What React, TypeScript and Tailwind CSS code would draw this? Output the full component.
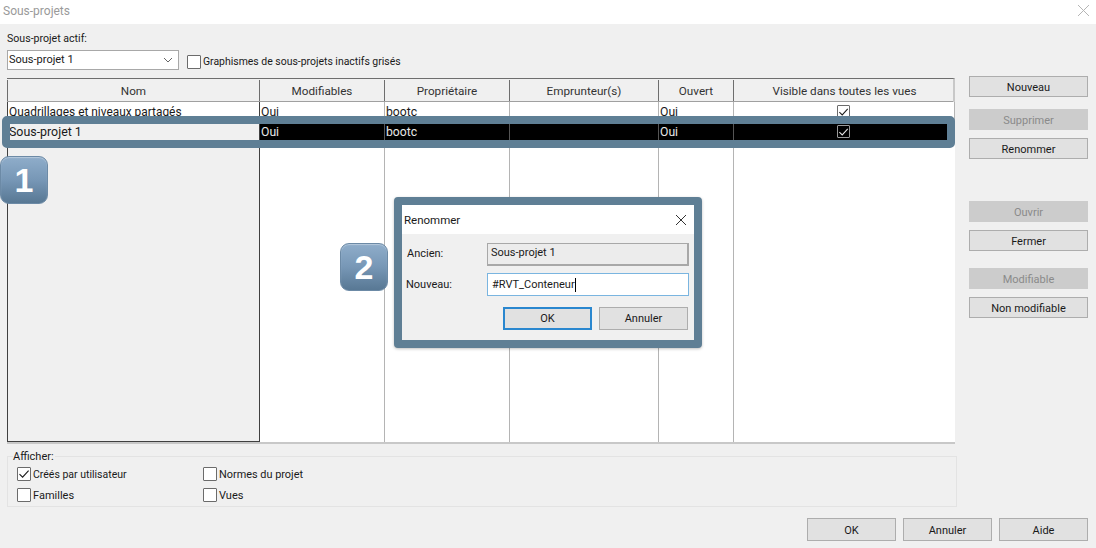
import React from "react";

const COLS = "grid grid-cols-[253px_125px_125px_149px_75px_221px]";

function Box({ checked, size = "w-[14px] h-[14px]", tone = "border-[#6b6b6b] bg-white" }: { checked?: boolean; size?: string; tone?: string }) {
  return (
    <span className={`${size} ${tone} border rounded-[1px] flex items-center justify-center shrink-0`}>
      {checked && (
        <svg width="12" height="12" viewBox="0 0 12 12" fill="none">
          <path d="M1.5 6.2 L4.6 9.2 L10.6 2.6" stroke="currentColor" strokeWidth="1.1" />
        </svg>
      )}
    </span>
  );
}

function Btn({ children, disabled, w = "w-[119px]", mt = "" }: { children: React.ReactNode; disabled?: boolean; w?: string; mt?: string }) {
  return (
    <div
      className={`${w} ${mt} h-[21px] pt-[1px] flex items-center justify-center border text-[11px] leading-none ${
        disabled ? "bg-[#cccccc] border-[#cccccc] text-[#8a8a8a]" : "bg-[#e1e1e1] border-[#adadad] text-[#1a1a1a]"
      }`}
    >
      {children}
    </div>
  );
}

function Check({ label, checked, text = "" }: { label: string; checked?: boolean; text?: string }) {
  return (
    <div className={`flex items-center gap-[2px] h-[14px] ${text}`}>
      <Box checked={checked} />
      <span className="pt-[1px]">{label}</span>
    </div>
  );
}

function Row({ name, nameSize, selected }: { name: string; nameSize: string; selected?: boolean }) {
  const tone = selected ? "bg-black text-[#e8e8e8] border-[#555555]" : "bg-white text-[#1a1a1a] border-[#b4b4b4]";
  const cell = `border-r ${tone} pl-[1px] pb-[1px] flex items-center overflow-hidden`;
  return (
    <div className={`${COLS} h-[20px] text-[12.2px]`}>
      <div className={`border-r border-l border-[#404040] pl-[1px] pb-[1px] flex items-center overflow-hidden ${nameSize} ${selected ? "bg-[#f0f0f0]" : "bg-white"} text-[#1a1a1a]`}>{name}</div>
      <div className={cell}>Oui</div>
      <div className={cell}>bootc</div>
      <div className={cell} />
      <div className={cell}>Oui</div>
      <div className={`${cell} justify-center pr-[3px]`}>
        <Box
          checked
          size="w-[13px] h-[13px]"
          tone={selected ? "border-[#9a9a9a] bg-black text-[#e8e8e8]" : "border-[#6b6b6b] bg-white text-[#1a1a1a]"}
        />
      </div>
    </div>
  );
}

function Badge({ n, pos }: { n: string; pos: string }) {
  return (
    <div className={`absolute ${pos} w-[48px] h-[48px] rounded-[9px] border border-[#6c8aa6] bg-gradient-to-b from-[#8fadca] via-[#7797b6] to-[#587894] shadow-[inset_0_1px_1px_rgba(255,255,255,0.35)] text-white text-[34px] font-bold flex items-center justify-center font-['Liberation_Sans',sans-serif]`}>
      {n}
    </div>
  );
}

export default function App() {
  return (
    <div className="relative w-[1096px] h-[548px] overflow-hidden bg-[#f0f0f0] flex flex-col text-[11px] leading-[14px] text-[#1a1a1a] font-['Roboto',sans-serif]">
      <div className="h-[24px] bg-white flex items-center justify-between pl-[3px] pr-[6px] pb-[3px] shrink-0">
        <span className="text-[#9a9a9a] text-[12px]">Sous-projets</span>
        <svg width="13" height="13" viewBox="0 0 13 13" stroke="#b5b5b5" strokeWidth="1" fill="none">
          <path d="M1 1 L12 12 M12 1 L1 12" />
        </svg>
      </div>

      <div className="flex-1 flex min-h-0">
        <div className="pl-[7px] w-[957px] flex flex-col shrink-0">
          <div className="mt-[8px] h-[14px] text-[10.6px]">Sous-projet actif:</div>
          <div className="mt-[4px] flex items-center h-[20px]">
            <div className="w-[172px] h-[20px] bg-white border border-[#a8a8a8] flex items-center justify-between pl-[1px] pr-[5px]">
              <span>Sous-projet 1</span>
              <svg width="10" height="6" viewBox="0 0 10 6" fill="none" stroke="#666666" strokeWidth="1">
                <path d="M1 1 L5 5 L9 1" />
              </svg>
            </div>
            <div className="ml-[8px] mt-[3px] flex items-center gap-[2px] text-[10.45px]">
              <Box />
              <span>Graphismes de sous-projets inactifs grisés</span>
            </div>
          </div>

          <div className="mt-[8px] w-[948px] h-[366px] flex flex-col border-t border-[#6e6e6e] border-r-2 border-r-[#c8c8c8] border-b-2 border-b-[#c8c8c8]">
            <div className={`${COLS} h-[23px] border-b border-[#a0a0a0] text-[11.7px] text-[#333333] pt-[1px]`}>
              <div className="border-l border-r border-[#6e6e6e] flex items-center justify-center">Nom</div>
              <div className="border-r border-[#6e6e6e] flex items-center justify-center">Modifiables</div>
              <div className="border-r border-[#6e6e6e] flex items-center justify-center">Propriétaire</div>
              <div className="border-r border-[#6e6e6e] flex items-center justify-center">Emprunteur(s)</div>
              <div className="border-r border-[#6e6e6e] flex items-center justify-center">Ouvert</div>
              <div className="flex items-center justify-center">Visible dans toutes les vues</div>
            </div>
            <Row name="Quadrillages et niveaux partagés" nameSize="text-[11.9px]" />
            <Row name="Sous-projet 1" nameSize="text-[12.4px]" selected />
            <div className={`${COLS} flex-1`}>
              <div className="bg-[#f0f0f0] border-l border-r border-b border-[#404040]" />
              <div className="bg-white border-r border-[#b4b4b4]" />
              <div className="bg-white border-r border-[#b4b4b4]" />
              <div className="bg-white border-r border-[#b4b4b4]" />
              <div className="bg-white border-r border-[#b4b4b4]" />
              <div className="bg-white" />
            </div>
          </div>

          <div className="relative mt-[12px] h-[51px] w-[950px] border border-[#e3e3e3] grid grid-cols-[186px_1fr] grid-rows-[14px_14px] gap-y-[7px] pl-[9px] pt-[10px]">
            <span className="absolute left-[5px] top-[-7px] bg-[#f0f0f0] pr-[1px]">Afficher:</span>
            <Check label="Créés par utilisateur" checked text="text-[10.5px]" />
            <Check label="Normes du projet" text="text-[10.9px]" />
            <Check label="Familles" />
            <Check label="Vues" />
          </div>
        </div>

        <div className="ml-[12px] pt-[52px] flex flex-col">
          <Btn>Nouveau</Btn>
          <Btn disabled mt="mt-[12px]">Supprimer</Btn>
          <Btn mt="mt-[8px]">Renommer</Btn>
          <Btn disabled mt="mt-[42px]">Ouvrir</Btn>
          <Btn mt="mt-[8px]">Fermer</Btn>
          <Btn disabled mt="mt-[17px]">Modifiable</Btn>
          <Btn mt="mt-[8px]">Non modifiable</Btn>
        </div>
      </div>

      <div className="h-[30px] shrink-0 flex justify-end gap-[7px] pr-[8px] [&>div]:h-[23px]">
        <Btn w="w-[89px]">OK</Btn>
        <Btn w="w-[89px]">Annuler</Btn>
        <Btn w="w-[89px]">Aide</Btn>
      </div>

      {/* Annotation: highlight around the selected row */}
      <div className="absolute left-[2px] top-[116px] w-[953px] h-[32px] border-8 border-[#5f7f95] rounded-[5px]" />

      <Badge n="1" pos="left-0 top-[156px]" />
      <Badge n="2" pos="left-[340px] top-[243px]" />

      {/* Rename dialog */}
      <div className="absolute left-[394px] top-[197px] w-[308px] h-[151px] border-8 border-[#5f7f95] rounded-[4px] bg-[#f0f0f0] flex flex-col shadow-[0_1px_3px_rgba(0,0,0,0.25)]">
        <div className="h-[29px] bg-white flex items-center justify-between pl-[2px] pr-[7px] shrink-0 text-[11.5px]">
          <span>Renommer</span>
          <svg width="12" height="12" viewBox="0 0 12 12" stroke="#333333" strokeWidth="1" fill="none">
            <path d="M1 1 L11 11 M11 1 L1 11" />
          </svg>
        </div>
        <div className="grid grid-cols-[81px_202px] grid-rows-[23px_23px] gap-y-[7px] mt-[9px] pl-[4px] items-center">
          <span className="pl-[1px] pb-[2px]">Ancien:</span>
          <div className="h-[23px] bg-[#ececec] border border-[#a8a8a8] border-b-2 border-r-2 flex items-center pl-[3px] pb-[2px]">Sous-projet 1</div>
          <span>Nouveau:</span>
          <div className="h-[23px] bg-white border border-[#7ab5e0] flex items-center pl-[4px]">
            <span>#RVT_Conteneur</span>
            <span className="w-px h-[14px] bg-black" />
          </div>
        </div>
        <div className="flex justify-end gap-[7px] pr-[6px] mt-[11px]">
          <div className="w-[89px] h-[23px] bg-[#e1e1e1] border-2 border-[#2a87cf] flex items-center justify-center">OK</div>
          <div className="w-[89px] h-[23px] bg-[#e1e1e1] border border-[#adadad] flex items-center justify-center">Annuler</div>
        </div>
      </div>
    </div>
  );
}
